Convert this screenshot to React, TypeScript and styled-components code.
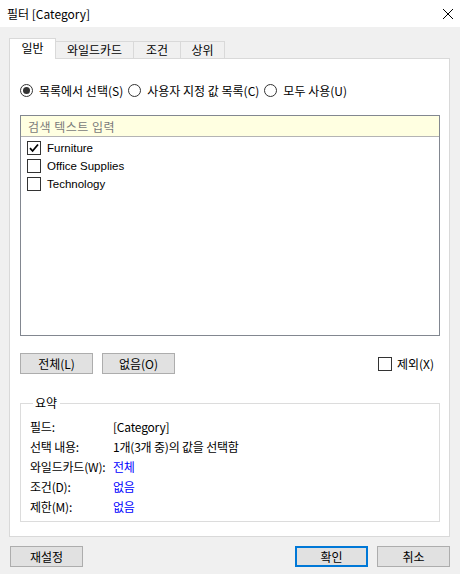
import React, { useState } from 'react'
import styled, { createGlobalStyle } from 'styled-components'

const GlobalStyle = createGlobalStyle`
  body {
    margin: 0;
    font-family: "Noto Sans CJK KR", "Noto Sans", sans-serif;
    font-size: 12px;
    color: #000;
  }
`

const Window = styled.div`
  width: 460px;
  height: 574px;
  background-color: #f0f0f0;
  display: flex;
  flex-direction: column;
  overflow: hidden;
`

const TitleBar = styled.div`
  height: 27px;
  background-color: white;
  display: flex;
  align-items: center;
  justify-content: space-between;
  padding: 0 6px 0 7px;
  font-size: 12px;
`

const Body = styled.div`
  padding: 11px 10px 0 9px;
  display: flex;
  flex-direction: column;
`

const TabStrip = styled.div`
  display: flex;
  align-items: flex-end;
  height: 21px;
  margin-bottom: -1px;
  position: relative;
  z-index: 1;
`

const Tab = styled.div<{ $active?: boolean; $first?: boolean; $width: number }>`
  box-sizing: border-box;
  width: ${p => p.$width}px;
  height: ${p => (p.$active ? 21 : 18)}px;
  margin-left: ${p => (p.$first ? 0 : -1)}px;
  display: flex;
  align-items: center;
  justify-content: center;
  border: 1px solid #d9d9d9;
  border-bottom: ${p => (p.$active ? 'none' : '1px solid #d9d9d9')};
  background-color: ${p => (p.$active ? 'white' : '#f0f0f0')};
  padding-bottom: ${p => (p.$active ? 2 : 0)}px;
  position: relative;
  z-index: ${p => (p.$active ? 2 : 1)};
  line-height: 1;
`

const Panel = styled.div`
  box-sizing: border-box;
  width: 441px;
  height: 479px;
  background-color: white;
  border: 1px solid #d9d9d9;
  padding: 22px 9px 0 10px;
  display: flex;
  flex-direction: column;
`

const RadioRow = styled.div`
  display: flex;
  align-items: center;
  gap: 5px;
  height: 18px;
`

const RadioItem = styled.label`
  display: flex;
  align-items: center;
  gap: 6px;
`

const RadioCircle = styled.span<{ $checked?: boolean }>`
  box-sizing: border-box;
  width: 13px;
  height: 13px;
  border-radius: 50%;
  border: 1px solid #333;
  display: flex;
  align-items: center;
  justify-content: center;
  &::after {
    content: '';
    width: 7px;
    height: 7px;
    border-radius: 50%;
    background-color: #333;
    display: ${p => (p.$checked ? 'block' : 'none')};
  }
`

const ListBox = styled.div`
  box-sizing: border-box;
  margin-top: 16px;
  width: 420px;
  height: 221px;
  border: 1px solid #828790;
  display: flex;
  flex-direction: column;
`

const SearchBar = styled.div`
  height: 20px;
  background-color: #ffffe1;
  border-bottom: 1px solid #b4b4b4;
  display: flex;
  align-items: center;
  padding-left: 7px;
  color: #7a7a7a;
  letter-spacing: 0.5px;
`

const ItemList = styled.div`
  padding: 2px 0 0 6px;
  display: flex;
  flex-direction: column;
`

const Item = styled.label`
  height: 18px;
  display: flex;
  align-items: center;
  gap: 6px;
  font-family: "Liberation Sans", Arial, sans-serif;
  font-size: 11.5px;
`

const Box = styled.span`
  box-sizing: border-box;
  width: 14px;
  height: 14px;
  border: 1px solid #333;
  display: flex;
  align-items: center;
  justify-content: center;
`

const ButtonRow = styled.div`
  display: flex;
  align-items: center;
  margin-top: 17px;
  gap: 9px;
`

const Button = styled.button<{ $default?: boolean }>`
  box-sizing: border-box;
  width: 73px;
  height: 21px;
  background-color: #e1e1e1;
  border: ${p => (p.$default ? '2px solid #0078d7' : '1px solid #adadad')};
  font-family: inherit;
  font-size: 12px;
  color: #000;
  padding: 0;
  line-height: 1;
`

const ExcludeCheck = styled.label`
  margin-left: auto;
  margin-right: 6px;
  display: flex;
  align-items: center;
  gap: 5px;
`

const GroupBox = styled.fieldset`
  box-sizing: border-box;
  width: 420px;
  height: 125px;
  margin: 23px 0 0 0;
  padding: 7px 0 0 9px;
  border: 1px solid #dcdcdc;
  display: flex;
  flex-direction: column;
`

const Legend = styled.legend`
  padding: 0 3px 0 2px;
  margin-left: 3px;
  line-height: 1;
`

const SummaryRow = styled.div`
  display: grid;
  grid-template-columns: 83px 1fr;
  height: 20px;
  align-items: center;
  letter-spacing: -0.2px;
`

const Value = styled.span<{ $link?: boolean }>`
  color: ${p => (p.$link ? '#0000ff' : '#000')};
`

const Footer = styled.div`
  display: flex;
  align-items: center;
  padding: 9px 10px 0 10px;
`

const Spacer = styled.div`
  flex: 1;
`

const FooterButtons = styled.div`
  display: flex;
  gap: 9px;
`

const Check = () => (
  <svg width="12" height="12" viewBox="0 0 12 12">
    <path d="M2 6.2 L4.6 9 L10 2.5" stroke="#000" strokeWidth="1.8" fill="none" />
  </svg>
)

const CloseIcon = () => (
  <svg width="12" height="12" viewBox="0 0 12 12">
    <path d="M1 1 L11 11 M11 1 L1 11" stroke="#000" strokeWidth="1" />
  </svg>
)

const tabs = [
  { name: '일반', width: 47 },
  { name: '와일드카드', width: 79 },
  { name: '조건', width: 48 },
  { name: '상위', width: 45 },
]

const items = [
  { name: 'Furniture', checked: true },
  { name: 'Office Supplies', checked: false },
  { name: 'Technology', checked: false },
]

const summary = [
  { label: '필드:', value: '[Category]' },
  { label: '선택 내용:', value: '1개(3개 중)의 값을 선택함' },
  { label: '와일드카드(W):', value: '전체', link: true },
  { label: '조건(D):', value: '없음', link: true },
  { label: '제한(M):', value: '없음', link: true },
]

export default function App() {
  const [mode] = useState('list')

  return (
    <Window>
      <GlobalStyle />
      <TitleBar>
        <span>필터 [Category]</span>
        <CloseIcon />
      </TitleBar>
      <Body>
        <TabStrip>
          {tabs.map((t, i) => (
            <Tab key={t.name} $active={i === 0} $first={i === 0} $width={t.width}>
              {t.name}
            </Tab>
          ))}
        </TabStrip>
        <Panel>
          <RadioRow>
            <RadioItem>
              <RadioCircle $checked={mode === 'list'} />
              목록에서 선택(S)
            </RadioItem>
            <RadioItem>
              <RadioCircle $checked={mode === 'custom'} />
              사용자 지정 값 목록(C)
            </RadioItem>
            <RadioItem>
              <RadioCircle $checked={mode === 'all'} />
              모두 사용(U)
            </RadioItem>
          </RadioRow>
          <ListBox>
            <SearchBar>검색 텍스트 입력</SearchBar>
            <ItemList>
              {items.map(it => (
                <Item key={it.name}>
                  <Box>{it.checked && <Check />}</Box>
                  {it.name}
                </Item>
              ))}
            </ItemList>
          </ListBox>
          <ButtonRow>
            <Button>전체(L)</Button>
            <Button>없음(O)</Button>
            <ExcludeCheck>
              <Box />
              제외(X)
            </ExcludeCheck>
          </ButtonRow>
          <GroupBox>
            <Legend>요약</Legend>
            {summary.map(s => (
              <SummaryRow key={s.label}>
                <span>{s.label}</span>
                <Value $link={s.link}>{s.value}</Value>
              </SummaryRow>
            ))}
          </GroupBox>
        </Panel>
      </Body>
      <Footer>
        <Button>재설정</Button>
        <Spacer />
        <FooterButtons>
          <Button $default>확인</Button>
          <Button>취소</Button>
        </FooterButtons>
      </Footer>
    </Window>
  )
}
